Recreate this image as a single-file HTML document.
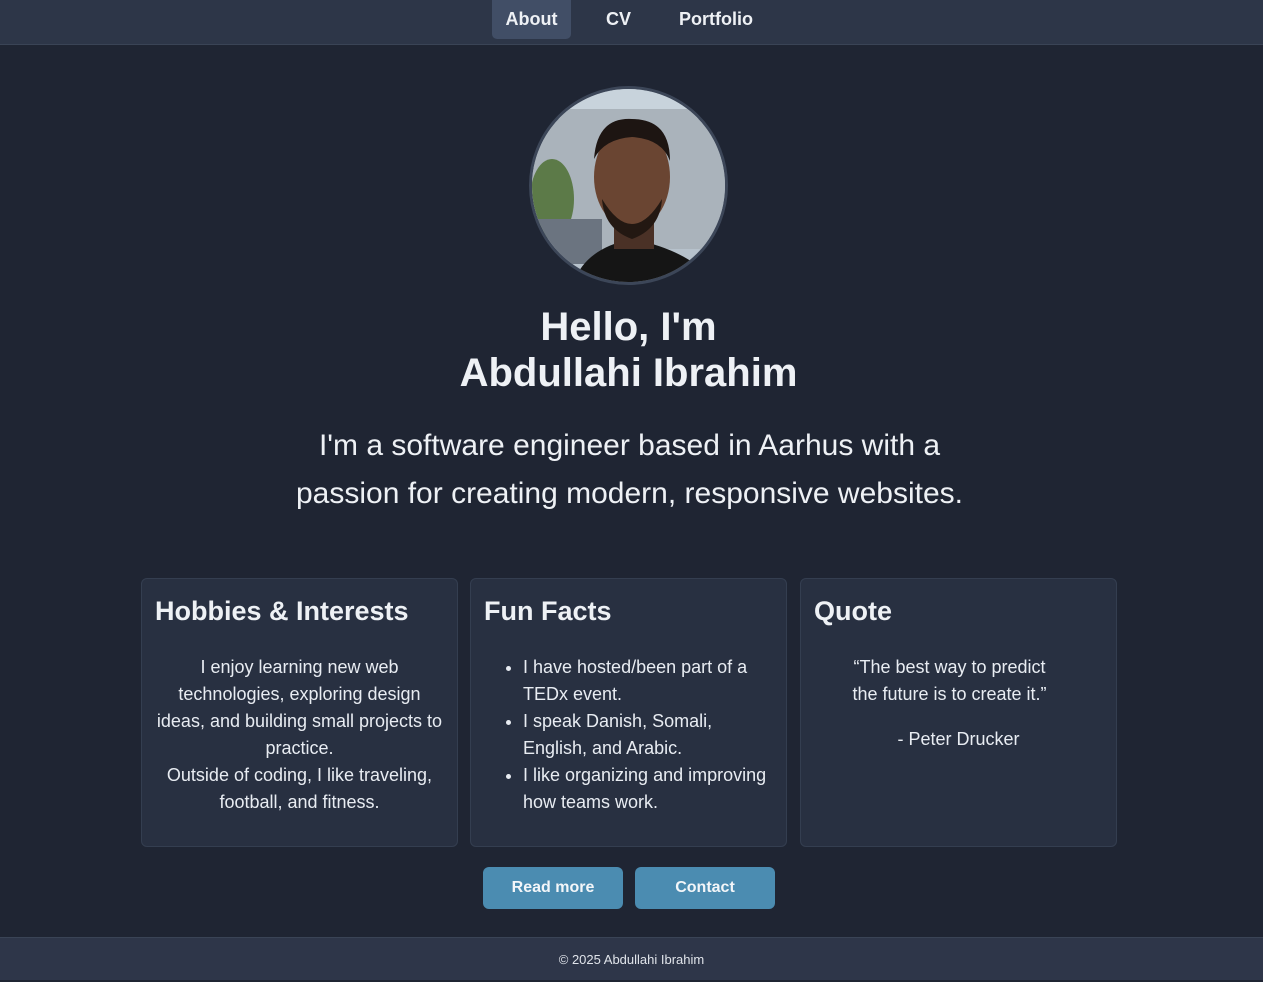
<!DOCTYPE html>
<html><head><style>
*{box-sizing:border-box;margin:0;padding:0}
body{width:1263px;height:982px;background:#1f2533;font-family:"Liberation Sans",sans-serif;color:#e8ecf2;position:relative;overflow:hidden}
nav{position:absolute;top:0;left:0;width:1263px;height:45px;background:#2d3648;border-bottom:1px solid #3a4456}
nav a{position:absolute;top:0;height:39px;line-height:38px;font-weight:bold;font-size:18px;color:#eef1f5;text-decoration:none}
.abt{left:492px;width:79px;text-align:center;background:#414e66;border-radius:0 0 5px 5px}
.av{position:absolute;left:529px;top:86px;width:199px;height:199px;border-radius:50%;border:3px solid #3c4658;overflow:hidden}
h1{position:absolute;top:304px;left:-3px;width:1263px;text-align:center;font-size:40px;line-height:46px;font-weight:bold;color:#eef1f5}
.lead{position:absolute;top:422px;left:-2px;width:1263px;text-align:center;font-size:30px;line-height:48px;color:#eef1f5}
.card{position:absolute;top:578px;width:317px;height:269px;background:#283041;border:1px solid #343e50;border-radius:6px}
.card h2{position:absolute;left:13px;top:17px;font-size:27px;font-weight:bold;color:#eef1f5}
.card .t{position:absolute;top:75px;left:0;width:100%;text-align:center;font-size:18px;line-height:27px}
.card ul{position:absolute;top:75px;left:52px;font-size:18px;line-height:27px;width:255px}
.btn{position:absolute;top:867px;width:140px;height:42px;background:#4b8cb1;border-radius:6px;text-align:center;line-height:42px;font-weight:bold;font-size:16px;color:#f3f6f9}
footer{position:absolute;top:937px;left:0;width:1263px;height:43px;background:#2e3649;border-top:1px solid #3a4456;text-align:center;line-height:43px;font-size:13px;color:#e0e4ea}
</style></head><body>
<nav><a class="abt">About</a><a style="left:606px">CV</a><a style="left:679px">Portfolio</a></nav>
<div class="av"><svg width="199" height="199" viewBox="0 0 199 199">
<rect width="199" height="199" fill="#b7c2cc"/>
<rect x="0" y="0" width="199" height="30" fill="#c8d3dc"/>
<rect x="0" y="20" width="199" height="140" fill="#aab3bb"/>
<ellipse cx="20" cy="110" rx="22" ry="40" fill="#5c7a48"/>
<rect x="0" y="130" width="70" height="45" fill="#6b7480"/>
<path d="M40 199 Q50 160 100 150 Q150 160 175 185 L180 199Z" fill="#151515"/>
<rect x="82" y="115" width="40" height="45" fill="#4a3126"/>
<ellipse cx="100" cy="88" rx="38" ry="52" fill="#6a4532"/>
<path d="M62 70 Q65 28 100 30 Q138 30 138 72 Q130 50 100 48 Q72 50 62 70Z" fill="#1d1512"/>
<path d="M70 110 Q100 160 130 110 Q128 140 100 150 Q72 140 70 110Z" fill="#231812"/>
</svg></div>
<h1>Hello, I'm<br>Abdullahi Ibrahim</h1>
<div class="lead">I'm a software engineer based in Aarhus with a<br>passion for creating modern, responsive websites.</div>
<div class="card" style="left:141px"><h2>Hobbies &amp; Interests</h2><div class="t">I enjoy learning new web<br>technologies, exploring design<br>ideas, and building small projects to<br>practice.<br>Outside of coding, I like traveling,<br>football, and fitness.</div></div>
<div class="card" style="left:470px"><h2>Fun Facts</h2><ul><li>I have hosted/been part of a TEDx event.</li><li>I speak Danish, Somali, English, and Arabic.</li><li>I like organizing and improving how teams work.</li></ul></div>
<div class="card" style="left:800px"><h2>Quote</h2><div class="t"><div style="position:relative;left:-9px">“The best way to predict<br>the future is to create it.”</div><div style="height:18px"></div>- Peter Drucker</div></div>
<div class="btn" style="left:483px">Read more</div>
<div class="btn" style="left:635px">Contact</div>
<footer>© 2025 Abdullahi Ibrahim</footer>
</body></html>
